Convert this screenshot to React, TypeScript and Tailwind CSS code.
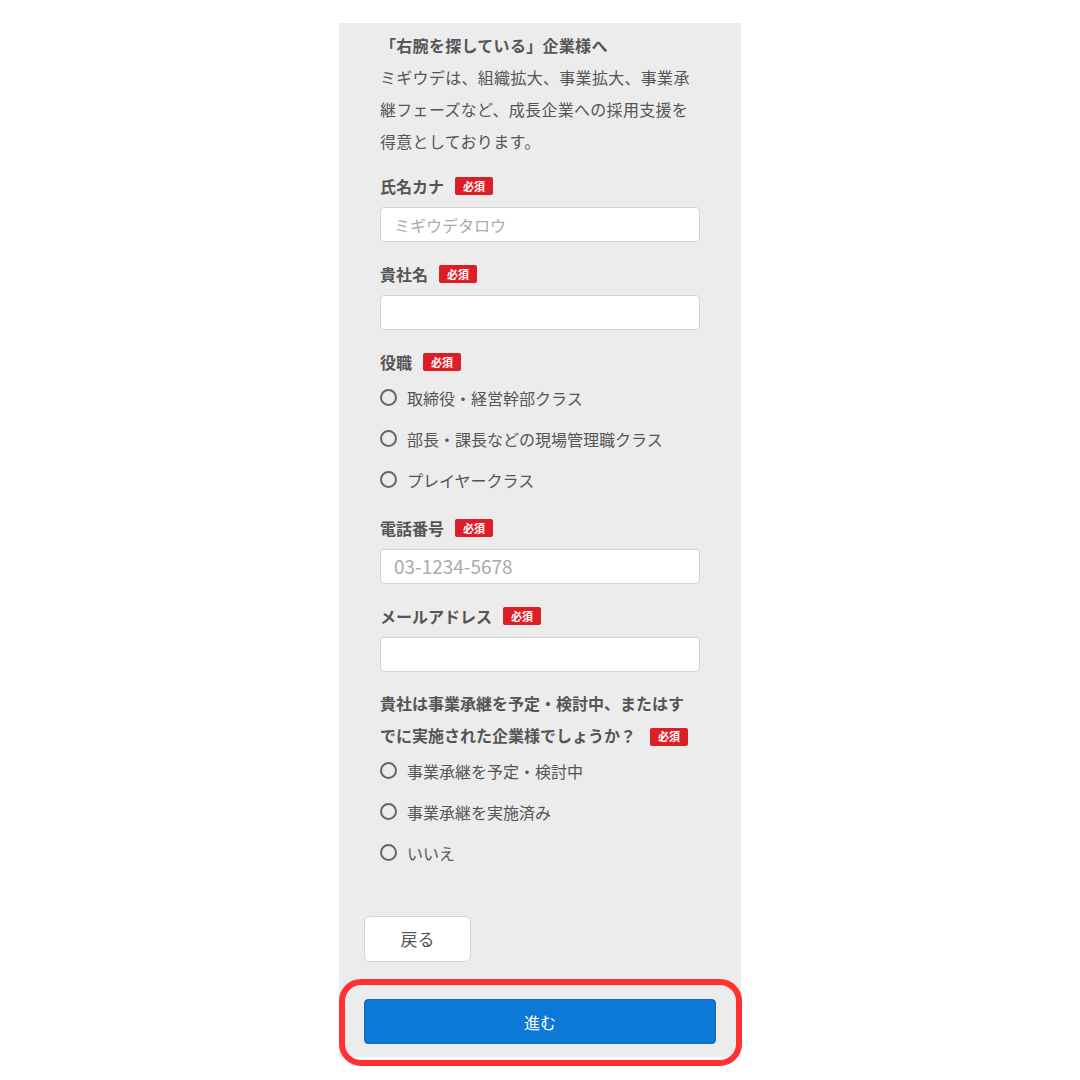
import React from "react";

const FONT = { fontFamily: '"Noto Sans CJK JP", "Noto Sans", sans-serif' };

function Badge() {
  return (
    <span className="ml-[11px] inline-flex h-[18px] w-[38px] items-center justify-center rounded-[2px] bg-[#dc1f26] text-[11px] font-bold leading-none text-white">
      必須
    </span>
  );
}

function Label({ text, className = "" }: { text: string; className?: string }) {
  return (
    <div className={`flex h-[32px] items-center text-[16px] font-bold text-[#555] ${className}`}>
      <span>{text}</span>
      <Badge />
    </div>
  );
}

function Input({ placeholder = "", className = "" }: { placeholder?: string; className?: string }) {
  return (
    <div
      className={`mt-[5px] flex h-[35px] w-[320px] items-center rounded-[4px] border border-[#d3d3d3] bg-white pl-[13px] text-[#aaa] ${className}`}
    >
      {placeholder}
    </div>
  );
}

function Radio({ text }: { text: string }) {
  return (
    <div className="flex h-[41px] items-center">
      <span className="h-[17px] w-[17px] rounded-full border-2 border-[#666]" />
      <span className="ml-[10px] text-[16px] text-[#555]">{text}</span>
    </div>
  );
}

export default function App() {
  return (
    <div className="flex min-h-[1080px] items-start justify-center bg-white pt-[23px]" style={FONT}>
      <div className="w-[402px] bg-[#ececec] pb-[13px] pt-[6px]">
        <div className="px-[41px]">
          <div className="text-[16px] font-bold leading-[32px] tracking-[0.3px] text-[#555]">
            「右腕を探している」企業様へ
          </div>
          <div className="text-[16px] leading-[32px] tracking-[0.3px] text-[#555]">
            ミギウデは、組織拡大、事業拡大、事業承
            <br />
            継フェーズなど、成長企業への採用支援を
            <br />
            得意としております。
          </div>

          <Label text="氏名カナ" className="mt-[13px]" />
          <Input placeholder="ミギウデタロウ" className="text-[16px]" />

          <Label text="貴社名" className="mt-[16px]" />
          <Input />

          <Label text="役職" className="mt-[16px]" />
          <div className="-mt-[1px]">
            <Radio text="取締役・経営幹部クラス" />
            <Radio text="部長・課長などの現場管理職クラス" />
            <Radio text="プレイヤークラス" />
          </div>

          <Label text="電話番号" className="mt-[12px]" />
          <Input placeholder="03-1234-5678" className="text-[19px]" />

          <Label text="メールアドレス" className="mt-[16px]" />
          <Input />

          <div className="mt-[15px] text-[16px] font-bold leading-[32px] text-[#555]">
            貴社は事業承継を予定・検討中、またはす
            <br />
            でに実施された企業様でしょうか？
            <span className="relative top-[-1px] ml-[14px] inline-flex h-[18px] w-[38px] items-center justify-center rounded-[2px] bg-[#dc1f26] align-middle text-[11px] font-bold leading-none text-white">
              必須
            </span>
          </div>
          <div className="-mt-[1px]">
            <Radio text="事業承継を予定・検討中" />
            <Radio text="事業承継を実施済み" />
            <Radio text="いいえ" />
          </div>
        </div>

        <div className="px-[25px]">
          <div className="mt-[43px] flex h-[46px] w-[107px] items-center justify-center rounded-[6px] border border-[#d5d5d5] bg-white text-[17px] text-[#555]">
            戻る
          </div>
          <div className="relative mt-[37px]">
            <div className="flex h-[45px] w-full items-center justify-center rounded-[4px] border border-[#1a68b0] bg-[#0b79d5] text-[16px] text-white">
              進む
            </div>
            <div className="pointer-events-none absolute -bottom-[22px] -left-[25px] -right-[26px] -top-[20px] rounded-[22px] border-[6px] border-[#ff3131]" />
          </div>
        </div>
      </div>
    </div>
  );
}
